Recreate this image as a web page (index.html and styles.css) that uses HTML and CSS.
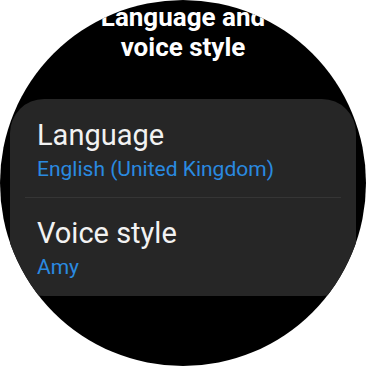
FILE: index.html
```html
<!DOCTYPE html>
<html>
<head>
<meta charset="utf-8">
<link rel="stylesheet" href="styles.css">
</head>
<body>
<div class="watch">
  <div class="title-clip">
    <h1 class="title">Language and<br>voice style</h1>
  </div>
  <div class="card">
    <div class="item">
      <div class="label">Language</div>
      <div class="value">English (United Kingdom)</div>
    </div>
    <div class="divider"></div>
    <div class="item item-last">
      <div class="label">Voice style</div>
      <div class="value">Amy</div>
    </div>
  </div>
</div>
</body>
</html>
```
FILE: styles.css
```css
html, body {
  margin: 0;
  padding: 0;
  background: #ffffff;
}
.watch {
  width: 366px;
  height: 366px;
  border-radius: 50%;
  background: #000000;
  overflow: hidden;
  font-family: Roboto, "Liberation Sans", sans-serif;
  display: flex;
  flex-direction: column;
  align-items: stretch;
}
.title-clip {
  margin-top: 12px;
  height: 50px;
  overflow: hidden;
}
.title {
  margin: -10px 0 0 0;
  font-size: 26px;
  line-height: 30px;
  font-weight: 700;
  color: #ffffff;
  text-align: center;
}
.card {
  margin: 37px 10px 0 10px;
  background: #262626;
  border-radius: 34px;
  display: flex;
  flex-direction: column;
}
.item {
  padding: 19px 27px 16px 27px;
}
.item-last {
  padding: 18px 27px 17px 27px;
}
.label {
  font-size: 29px;
  line-height: 34px;
  color: #f2f2f2;
}
.value {
  margin-top: 5px;
  font-size: 21px;
  line-height: 24px;
  color: #2a8ae0;
}
.divider {
  height: 1px;
  margin: 0 15px;
  background: #353535;
}
```
